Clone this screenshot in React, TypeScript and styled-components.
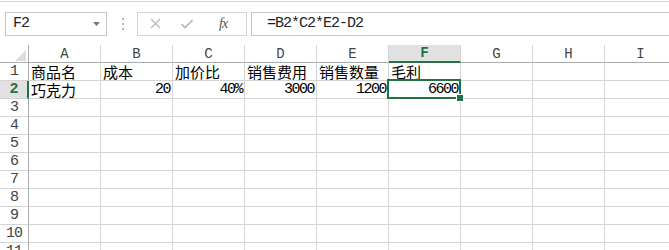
import React from 'react';
import styled, { createGlobalStyle, css } from 'styled-components';

const GREEN = '#217346';
const GRID = '#d4d4d4';

const GlobalStyle = createGlobalStyle`
  html, body {
    margin: 0;
    padding: 0;
    background: #fff;
    overflow: hidden;
  }
`;

const Window = styled.div`
  width: 669px;
  height: 250px;
  overflow: hidden;
  padding-top: 1px;
  box-sizing: border-box;
  font-family: 'Liberation Mono', 'Noto Sans CJK SC', monospace;
  color: #000;
`;

const FormulaBar = styled.div`
  display: flex;
  align-items: center;
  height: 44px;
  box-sizing: border-box;
  border-top: 1px solid #d5d5d5;
  padding: 10px 0 10px 5px;
`;

const NameBox = styled.div`
  display: flex;
  align-items: center;
  justify-content: space-between;
  width: 102px;
  height: 24px;
  box-sizing: border-box;
  border: 1px solid #c6c6c6;
  padding: 0 6px 0 7px;
  font-size: 15px;
  letter-spacing: -1px;
  color: #222;
`;

const Grip = styled.div`
  display: flex;
  flex-direction: column;
  gap: 3px;
  margin: 0 13px 0 15px;
`;

const GripDot = styled.span`
  width: 2px;
  height: 2px;
  background: #b4b4b4;
`;

const FxBox = styled.div`
  display: flex;
  align-items: center;
  width: 110px;
  height: 24px;
  box-sizing: border-box;
  border: 1px solid #d5d5d5;
  padding-left: 12px;
  gap: 20px;
`;

const FxLabel = styled.span`
  font-family: 'Liberation Serif', serif;
  font-style: italic;
  font-size: 14px;
  color: #555;
  margin-left: 6px;
  letter-spacing: -1px;
`;

const FormulaInput = styled.div`
  flex: 1;
  display: flex;
  align-items: center;
  height: 24px;
  margin-left: 4px;
  box-sizing: border-box;
  border: 1px solid #c6c6c6;
  border-right: none;
  padding-left: 15px;
  font-size: 15px;
  letter-spacing: -1px;
  color: #222;
`;

const Sheet = styled.div`
  display: grid;
  grid-template-columns: 29px repeat(9, 72px);
  grid-auto-rows: 18px;
`;

const Corner = styled.div`
  box-sizing: border-box;
  border-right: 1px solid #ababab;
  border-bottom: 1px solid #ababab;
  display: flex;
  align-items: flex-end;
  justify-content: flex-end;
  padding: 0 2px 1px 0;
`;

const ColHead = styled.div<{ $active?: boolean }>`
  box-sizing: border-box;
  border-right: 1px solid ${GRID};
  border-bottom: 1px solid #ababab;
  display: flex;
  align-items: center;
  justify-content: center;
  font-size: 14px;
  color: #444;
  ${({ $active }) =>
    $active &&
    css`
      background: #e1e1e1;
      color: ${GREEN};
      font-weight: bold;
      border-bottom: 2px solid ${GREEN};
    `}
`;

const RowHead = styled.div<{ $active?: boolean }>`
  box-sizing: border-box;
  border-right: 1px solid #ababab;
  border-bottom: 1px solid ${GRID};
  display: flex;
  align-items: center;
  justify-content: center;
  font-size: 15px;
  letter-spacing: -1px;
  color: #444;
  ${({ $active }) =>
    $active &&
    css`
      background: #e1e1e1;
      color: ${GREEN};
      font-weight: bold;
      border-right: 2px solid ${GREEN};
    `}
`;

const Cell = styled.div<{ $num?: boolean }>`
  position: relative;
  box-sizing: border-box;
  border-right: 1px solid ${GRID};
  border-bottom: 1px solid ${GRID};
  display: flex;
  align-items: center;
  white-space: nowrap;
  font-size: 15px;
  padding: 0 2px 0 2px;
  justify-content: ${({ $num }) => ($num ? 'flex-end' : 'flex-start')};
  letter-spacing: ${({ $num }) => ($num ? '-1.5px' : '0')};
`;

const Selection = styled.div`
  position: absolute;
  z-index: 2;
  left: -2px;
  top: -2px;
  right: -1px;
  bottom: -1px;
  border: 2px solid ${GREEN};
  pointer-events: none;
`;

const FillHandle = styled.div`
  position: absolute;
  right: -5px;
  bottom: -5px;
  width: 6px;
  height: 6px;
  background: ${GREEN};
  border: 1px solid #fff;
`;

const COLS = ['A', 'B', 'C', 'D', 'E', 'F', 'G', 'H', 'I'];

type CellValue = { text: string; num?: boolean };

const DATA: Record<number, (CellValue | null)[]> = {
  1: [
    { text: '商品名' },
    { text: '成本' },
    { text: '加价比' },
    { text: '销售费用' },
    { text: '销售数量' },
    { text: '毛利' },
  ],
  2: [
    { text: '巧克力' },
    { text: '20', num: true },
    { text: '40%', num: true },
    { text: '3000', num: true },
    { text: '1200', num: true },
    { text: '6600', num: true },
  ],
};

const SELECTED = { row: 2, col: 5 };

const App: React.FC = () => {
  const rows = Array.from({ length: 11 }, (_, i) => i + 1);
  return (
    <Window>
      <GlobalStyle />
      <FormulaBar>
        <NameBox>
          <span>F2</span>
          <svg width="7" height="4" viewBox="0 0 7 4">
            <path d="M0 0 H7 L3.5 4 Z" fill="#777" />
          </svg>
        </NameBox>
        <Grip>
          <GripDot />
          <GripDot />
          <GripDot />
        </Grip>
        <FxBox>
          <svg width="11" height="11" viewBox="0 0 11 11">
            <path d="M1 1 L10 10 M10 1 L1 10" stroke="#b8b8b8" strokeWidth="1.2" />
          </svg>
          <svg width="12" height="10" viewBox="0 0 12 10">
            <path d="M0.5 5 L4 8.5 L11.5 1" stroke="#b8b8b8" strokeWidth="1.6" fill="none" />
          </svg>
          <FxLabel>fx</FxLabel>
        </FxBox>
        <FormulaInput>=B2*C2*E2-D2</FormulaInput>
      </FormulaBar>
      <Sheet>
        <Corner>
          <svg width="11" height="11" viewBox="0 0 11 11">
            <path d="M11 0 V11 H0 Z" fill="#dcdcdc" />
          </svg>
        </Corner>
        {COLS.map((c, i) => (
          <ColHead key={c} $active={i === SELECTED.col}>
            {c}
          </ColHead>
        ))}
        {rows.map((r) => (
          <React.Fragment key={r}>
            <RowHead $active={r === SELECTED.row}>{r}</RowHead>
            {COLS.map((c, ci) => {
              const v = DATA[r]?.[ci];
              const selected = r === SELECTED.row && ci === SELECTED.col;
              return (
                <Cell key={c} $num={v?.num}>
                  {v?.text}
                  {selected && (
                    <Selection>
                      <FillHandle />
                    </Selection>
                  )}
                </Cell>
              );
            })}
          </React.Fragment>
        ))}
      </Sheet>
    </Window>
  );
};

export default App;
